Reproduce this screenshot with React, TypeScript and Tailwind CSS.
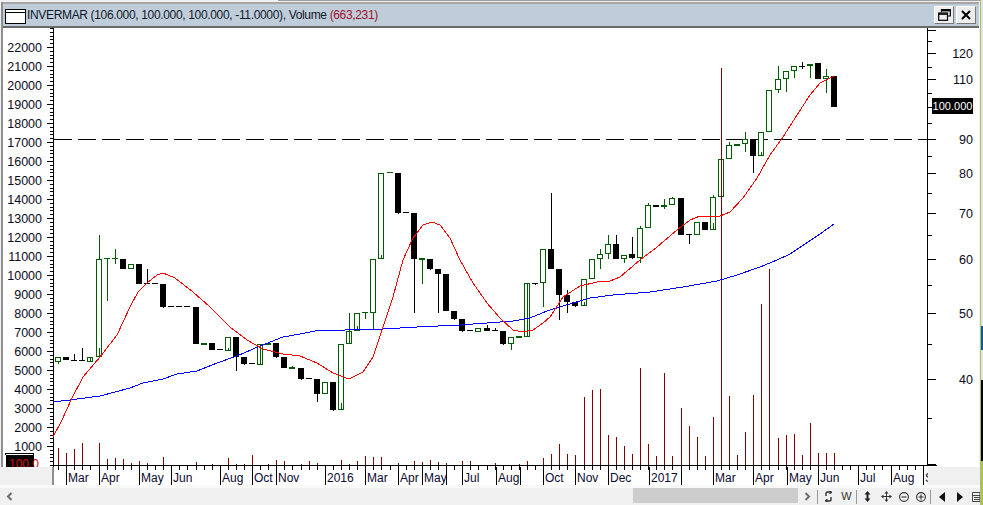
import React from "react";

type Candle = [number, "g" | "b", number, number, number?, number?, number?];

// x, kind, body top, body bottom, high, low, inner tick
const candles: Candle[] = [
  [58, "g", 357, 362, 357, 364],
  [66, "b", 357, 360],
  [74, "b", 360, 361, 354, 361],
  [82, "b", 360, 361, 348, 361],
  [90, "g", 357, 362, 357, 362, 357],
  [99, "g", 259, 357, 235, 357, 348],
  [107, "g", 258, 259, 258, 301],
  [115, "g", 258, 259, 249, 264],
  [123, "b", 259, 269],
  [131, "g", 264, 269],
  [139, "b", 264, 284],
  [147, "b", 283, 284, 269, 284],
  [155, "b", 283, 284],
  [163, "b", 284, 307, 284, 308],
  [171, "b", 306, 307],
  [179, "b", 306, 307],
  [187, "b", 306, 307],
  [196, "b", 307, 344],
  [204, "g", 343, 345],
  [212, "b", 343, 350],
  [220, "b", 349, 350],
  [228, "g", 337, 351, 337, 351, 348],
  [236, "b", 337, 357, 337, 371],
  [244, "b", 357, 364, 357, 365],
  [252, "b", 363, 364],
  [260, "g", 344, 365, 344, 365, 344],
  [268, "g", 343, 345, 342, 345],
  [276, "b", 343, 357, 343, 358],
  [284, "b", 357, 368],
  [292, "g", 367, 369, 366, 369],
  [301, "b", 368, 379, 368, 380],
  [309, "b", 378, 379],
  [317, "b", 379, 394, 379, 402],
  [325, "g", 382, 394],
  [333, "b", 382, 410, 382, 411],
  [341, "g", 344, 410, 344, 410, 403],
  [349, "g", 331, 344, 313, 344, 331],
  [357, "g", 313, 331, 313, 331, 326],
  [365, "g", 312, 313, 312, 319],
  [373, "g", 259, 313, 259, 330],
  [381, "g", 173, 259, 173, 259, 255],
  [390, "g", 172, 173],
  [398, "b", 173, 213, 173, 214],
  [406, "b", 212, 213],
  [414, "b", 213, 259, 213, 313],
  [422, "g", 258, 260, 258, 284],
  [430, "b", 259, 269, 259, 270],
  [438, "b", 269, 274, 269, 313],
  [446, "b", 274, 311],
  [454, "b", 311, 319, 311, 320],
  [462, "b", 319, 331, 319, 332],
  [470, "b", 330, 331],
  [478, "g", 328, 332],
  [487, "b", 328, 331, 325, 331],
  [495, "b", 330, 331, 328, 331],
  [503, "b", 331, 344, 331, 345],
  [511, "g", 337, 344, 337, 350],
  [519, "g", 336, 338],
  [527, "g", 283, 337, 283, 337, 283],
  [535, "b", 283, 284, 283, 285],
  [543, "g", 249, 283, 249, 307],
  [551, "b", 249, 269, 193, 269],
  [559, "b", 269, 295, 269, 320],
  [567, "b", 295, 302, 290, 313],
  [575, "b", 302, 306, 302, 307],
  [584, "g", 279, 306, 279, 306, 302],
  [592, "g", 259, 279],
  [600, "g", 254, 259, 249, 269],
  [608, "g", 244, 254, 235, 259],
  [616, "b", 244, 259, 235, 259],
  [624, "g", 255, 259, 255, 263],
  [632, "b", 254, 258, 237, 259],
  [640, "g", 228, 258, 226, 263],
  [648, "g", 205, 228, 203, 228],
  [656, "b", 205, 207],
  [664, "g", 205, 207, 199, 209],
  [672, "g", 198, 205, 197, 205],
  [681, "b", 198, 235],
  [689, "b", 234, 235, 234, 244],
  [697, "g", 222, 235],
  [705, "b", 222, 230],
  [713, "g", 197, 230, 195, 230, 223],
  [721, "g", 159, 197],
  [729, "g", 145, 159, 142, 159],
  [737, "g", 144, 146],
  [745, "g", 139, 144, 132, 152],
  [753, "b", 139, 156, 139, 173],
  [761, "g", 132, 156, 132, 156, 152],
  [769, "g", 90, 132],
  [778, "g", 79, 90, 66, 93],
  [786, "g", 71, 79, 71, 92],
  [794, "g", 66, 71, 66, 78],
  [802, "b", 66, 67, 62, 69],
  [810, "g", 64, 66, 64, 78],
  [818, "b", 63, 79],
  [826, "g", 76, 79, 69, 93],
  [834, "b", 76, 107],
];

// x, top of the volume bar (baseline is y=465)
const volumes: [number, number][] = [
  [58, 448], [66, 453], [74, 449], [82, 443], [99, 443], [107, 459], [115, 458], [123, 459], [131, 463],
  [139, 461], [147, 463], [163, 457], [196, 462], [212, 464], [228, 458], [236, 464], [244, 464], [252, 455],
  [268, 464], [276, 460], [284, 461], [301, 464], [309, 461], [317, 463], [341, 460], [349, 464], [357, 461],
  [365, 456], [373, 457], [381, 457], [398, 463], [414, 461], [422, 462], [430, 460], [438, 462], [446, 463],
  [462, 461], [470, 461], [495, 463], [519, 464], [527, 461], [543, 458], [551, 454], [559, 444], [567, 454],
  [575, 455], [584, 397], [592, 390], [600, 389], [608, 435], [616, 437], [624, 446], [632, 454], [640, 368],
  [648, 444], [656, 456], [664, 373], [672, 456], [681, 408], [689, 426], [697, 437], [705, 456], [713, 417],
  [721, 68], [729, 396], [737, 455], [745, 432], [753, 395], [761, 304], [769, 269], [778, 438], [786, 435],
  [794, 434], [802, 455], [810, 423], [818, 453], [826, 453], [834, 453],
];

const red =
  "53,437 62,420 71,400 83,377 100,357 117,335 130,307 138,292 147,283 157,275 163,273 175,278 193,292 210,307 230,327 247,340 263,349 283,354 300,356 317,363 333,373 349,379 363,372 373,357 383,327 393,297 403,260 413,238 423,225 432,222 440,225 450,238 460,260 473,283 487,303 500,318 513,330 523,332 533,330 543,323 550,317 563,297 580,286 597,282 610,281 620,277 640,260 657,247 677,230 690,220 700,216 720,216 730,212 743,198 757,178 770,155 783,137 797,115 810,95 820,83 834,76";
const blue =
  "53,402 70,400 100,396 130,388 143,383 163,379 177,374 197,371 217,363 237,356 260,346 283,337 300,334 320,330 345,330 383,329 417,327 460,325 487,323 513,321 530,318 547,311 563,306 590,298 613,295 650,292 683,287 717,281 737,275 760,267 777,260 790,254 805,244 820,234 834,224";

const tickXs = [
  58, 66, 74, 82, 90, 99, 107, 115, 123, 131, 139, 147, 155, 163, 171, 179, 187, 196, 204, 212, 220, 228, 236, 244,
  252, 260, 268, 276, 284, 292, 301, 309, 317, 325, 333, 341, 349, 357, 365, 373, 381, 390, 398, 406, 414, 422, 430,
  438, 446, 454, 462, 470, 478, 487, 495, 503, 511, 519, 527, 535, 543, 551, 559, 567, 575, 584, 592, 600, 608, 616,
  624, 632, 640, 648, 656, 664, 672, 681, 689, 697, 705, 713, 721, 729, 737, 745, 753, 761, 769, 778, 786, 794, 802,
  810, 818, 826, 834, 842, 850, 858, 866, 874, 882, 891, 899, 907, 915, 923,
];

const months: [number, string][] = [
  [66, "Mar"], [99, "Apr"], [139, "May"], [171, "Jun"], [220, "Aug"], [252, "Oct"], [276, "Nov"], [325, "2016"],
  [365, "Mar"], [398, "Apr"], [422, "May"], [446, ""], [462, "Jul"], [496, "Aug"], [520, ""], [543, "Oct"],
  [575, "Nov"], [608, "Dec"], [649, "2017"], [681, ""], [713, "Mar"], [753, "Apr"], [787, "May"], [818, "Jun"],
  [858, "Jul"], [891, "Aug"], [923, "Sep"],
];

const leftLabels = Array.from({ length: 22 }, (_, i) => (i + 1) * 1000);
const minorLeft = Array.from({ length: 116 }, (_, i) => 465 - i * 3.8);
const rightMajor: [number, string][] = [
  [30, ""], [53, "120"], [79, "110"], [139, "90"], [173, "80"], [213, "70"], [259, "60"], [313, "50"], [379, "40"], [464, ""],
];
const rightMinor = [41, 67, 93, 123, 156, 193, 235, 285, 344, 418];

const green = "#005c00";
const maroon = "#870000";

function CandleMark({ c }: { c: Candle }) {
  const [x, kind, top, bottom, high, low, inner] = c;
  const colour = kind === "g" ? green : "#000";
  const h = bottom - top;
  return (
    <g>
      {high !== undefined && low !== undefined && (
        <line x1={x + 0.5} x2={x + 0.5} y1={high} y2={low} stroke={colour} />
      )}
      {kind === "b" || h <= 2 ? (
        <rect x={x - 3} y={top} width={6} height={h} fill={colour} />
      ) : (
        <rect x={x - 2.5} y={top + 0.5} width={5} height={h - 1} fill="#fff" stroke={colour} />
      )}
      {inner !== undefined && <line x1={x + 0.5} x2={x + 0.5} y1={inner} y2={bottom} stroke={colour} />}
    </g>
  );
}

function Chart() {
  return (
    <svg width={976} height={439} viewBox="3 28 976 439" shapeRendering="crispEdges" className="block bg-white">
      {/* left price scale */}
      <line x1={53.5} x2={53.5} y1={28} y2={467} stroke="#000" />
      {minorLeft.map((y) => (
        <line key={y} x1={50} x2={53} y1={Math.round(y) + 0.5} y2={Math.round(y) + 0.5} stroke="#000" />
      ))}
      {leftLabels.map((v) => {
        const y = 465 - v * 0.019;
        return (
          <g key={v}>
            <line x1={47} x2={53} y1={Math.round(y) + 0.5} y2={Math.round(y) + 0.5} stroke="#000" />
            <text x={42} y={y + 4.5} textAnchor="end" fontSize={12.5} fill="#0a0a20" shapeRendering="auto">
              {v}
            </text>
          </g>
        );
      })}

      {/* volume box */}
      <path d="M5.5 455V453.5H33.5V455" fill="none" stroke="#000" />
      <rect x={6} y={455} width={28} height={12} fill="#000" />
      <text x={9} y={468} fontSize={12} fill="#e00000">
        100.0
      </text>

      {/* dashed level */}
      <line x1={54} x2={936} y1={139.5} y2={139.5} stroke="#000" strokeDasharray="18 6" />

      {candles.map((c) => (
        <CandleMark key={c[0]} c={c} />
      ))}
      {volumes.map(([x, top]) => (
        <line key={x} x1={x + 0.5} x2={x + 0.5} y1={top} y2={465} stroke={maroon} />
      ))}
      <polyline points={blue} fill="none" stroke="#0000ff" />
      <polyline points={red} fill="none" stroke="#ff0000" />

      {/* time axis start */}
      <line x1={53} x2={937} y1={465.5} y2={465.5} stroke="#000" />
      {tickXs.map((x) => (
        <line key={x} x1={x + 0.5} x2={x + 0.5} y1={465} y2={467} stroke="#000" />
      ))}

      {/* right price scale */}
      <line x1={927.5} x2={927.5} y1={28} y2={465} stroke="#000" />
      {rightMajor.map(([y, t]) => (
        <g key={y}>
          <line x1={928} x2={936} y1={y + 0.5} y2={y + 0.5} stroke="#000" />
          {t && (
            <text x={973} y={y + 4.5} textAnchor="end" fontSize={12.5} fill="#0a0a20" shapeRendering="auto">
              {t}
            </text>
          )}
        </g>
      ))}
      <line x1={928} x2={936} y1={107.5} y2={107.5} stroke="#000" />
      {rightMinor.map((y) => (
        <line key={y} x1={928} x2={932} y1={y + 0.5} y2={y + 0.5} stroke="#000" />
      ))}
      <rect x={932} y={98} width={41} height={16} fill="#000" />
      <text x={952.5} y={110} textAnchor="middle" fontSize={11} fill="#fff" shapeRendering="auto">
        100.000
      </text>
    </svg>
  );
}

function TimeAxis() {
  return (
    <svg width={874} height={18} viewBox="54 467 874 18" shapeRendering="crispEdges" className="block bg-white">
      {tickXs.map((x) => (
        <line key={x} x1={x + 0.5} x2={x + 0.5} y1={467} y2={470} stroke="#000" />
      ))}
      {months.map(([x, t]) => (
        <g key={x}>
          <line x1={x + 0.5} x2={x + 0.5} y1={467} y2={485} stroke="#000" />
          {t && (
            <text x={x + 2} y={482} fontSize={12} fill="#0a0a30" shapeRendering="auto">
              {t}
            </text>
          )}
        </g>
      ))}
    </svg>
  );
}

function Chevron({ left }: { left?: boolean }) {
  return (
    <svg width={7} height={9} viewBox="0 0 7 9">
      <path d={left ? "M5.5 1 2 4.5 5.5 8" : "M1.5 1 5 4.5 1.5 8"} fill="none" stroke="#6e6e6e" strokeWidth={2} />
    </svg>
  );
}

function Sep() {
  return <div className="h-[14px] w-px bg-[#9a9a9a]" />;
}

function Cell({ w, children }: { w: string; children: React.ReactNode }) {
  return <div className={`flex items-center justify-center ${w}`}>{children}</div>;
}

function BottomBar() {
  return (
    <div className="flex h-[17px] items-center">
      <div className="flex w-[633px] items-center pl-[6px]">
        <Chevron left />
      </div>
      <div className="mb-[2px] h-[15px] w-[165px] bg-[#cdcdcd]" />
      <Cell w="w-[18px]">
        <Chevron />
      </Cell>
      <div className="w-px" />
      <Sep />
      <Cell w="w-[20px]">
        <svg width={7} height={11} viewBox="0 0 7 11" fill="none" stroke="#333" strokeWidth={1.4}>
          <path d="M1 5V2.5Q1 1 3 1H5.5M4.5 0 6.5 1.3 4.5 2.8" />
          <path d="M6 6V8.5Q6 10 4 10H1.5M2.5 8.2.5 9.7 2.5 11" />
        </svg>
      </Cell>
      <Cell w="w-[17px]">
        <span className="text-[11px] leading-none text-[#333]">W</span>
      </Cell>
      <div className="w-px" />
      <Sep />
      <Cell w="w-[21px]">
        <svg width={7} height={11} viewBox="0 0 7 11" fill="#222">
          <path d="M3.5 0 6.5 3.5H4.5V7.5H6.5L3.5 11 .5 7.5H2.5V3.5H.5Z" />
        </svg>
      </Cell>
      <Cell w="w-[17px]">
        <svg width={11} height={11} viewBox="0 0 11 11" fill="#333">
          <path d="M5.5 0 7.5 2.5H6V5H8.5V3.5L11 5.5 8.5 7.5V6H6V8.5H7.5L5.5 11 3.5 8.5H5V6H2.5V7.5L0 5.5 2.5 3.5V5H5V2.5H3.5Z" />
        </svg>
      </Cell>
      <Cell w="w-[17px]">
        <svg width={10} height={10} viewBox="0 0 10 10" fill="none" stroke="#333" strokeWidth={1.1}>
          <circle cx={5} cy={5} r={4.4} />
          <path d="M2.5 5H7.5" />
        </svg>
      </Cell>
      <Cell w="w-[17px]">
        <svg width={10} height={10} viewBox="0 0 10 10" fill="none" stroke="#333" strokeWidth={1.1}>
          <circle cx={5} cy={5} r={4.4} />
          <path d="M2.5 5H7.5M5 2.5V7.5" />
        </svg>
      </Cell>
      <div className="w-[1px]" />
      <Sep />
      <Cell w="w-[22px]">
        <svg width={6} height={10} viewBox="0 0 6 10" fill="#111">
          <path d="M6 0V10L0 5Z" />
        </svg>
      </Cell>
      <Cell w="w-[14px]">
        <svg width={6} height={10} viewBox="0 0 6 10" fill="#111">
          <path d="M0 0V10L6 5Z" />
        </svg>
      </Cell>
      <Cell w="w-[13px] pl-[5px]">
        <svg width={8} height={10} viewBox="0 0 8 10" className="shrink-0" fill="none" stroke="#444">
          <path d="M.5.5H8V9.5H.5ZM.5 3.5H8M2 5.5H8M2 7.5H8" />
        </svg>
      </Cell>
    </div>
  );
}

const App: React.FC = () => {
  return (
    <div className="flex h-[505px] w-[983px] overflow-hidden bg-[#f0f0f0] font-['Liberation_Sans',Arial,sans-serif]">
      <div className="flex w-[980px] flex-col">
        <div className="flex h-[2px]">
          <div className="w-[278px]" />
          <div className="h-px flex-1 bg-[#a0a0a0]" />
        </div>
        <div className="ml-px border-l-2 border-[#8f8f8f]">
          <div className="mr-px flex h-[26px] items-center border-y-2 border-t-[#a6a6a6] border-b-[#6a6a6a] bg-[#bfcddb] pl-[2px] pr-[3px]">
            <svg width={21} height={15} viewBox="0 0 21 15" className="mt-[2px] shrink-0" fill="#fff" stroke="#000">
              <rect x={0.5} y={0.5} width={20} height={14} />
              <path d="M.5 3.5H20.5" />
            </svg>
            <span className="ml-px whitespace-nowrap text-[12px] tracking-[-0.34px] text-[#101828]">
              INVERMAR (106.000, 100.000, 100.000, -11.0000), Volume <span className="text-[#a0102c]">(663,231)</span>
            </span>
            <div className="flex-1" />
            <button className="flex h-[18px] w-[20px] items-center justify-center border border-t-white border-l-white border-r-[#777] border-b-[#777] bg-[#ededed]">
              <svg width={13} height={12} viewBox="0 0 13 12" fill="none" stroke="#000" strokeWidth={1.2}>
                <path d="M3.5 3V.7H12.3V7H9.5" />
                <path d="M3.5 1.6H12.3" strokeWidth={1.6} />
                <rect x={0.7} y={4} width={8.8} height={7.3} />
                <path d="M.7 5H9.5" strokeWidth={1.6} />
              </svg>
            </button>
            <button className="ml-[2px] flex h-[18px] w-[20px] items-center justify-center border border-t-white border-l-white border-r-[#777] border-b-[#777] bg-[#ededed]">
              <svg width={10} height={10} viewBox="0 0 10 10" fill="none" stroke="#000" strokeWidth={2}>
                <path d="M1 1 9 9M9 1 1 9" />
              </svg>
            </button>
          </div>
          <Chart />
        </div>
        <div className="flex h-[18px]">
          <div className="w-[54px] shrink-0 border-r-2 border-[#8f8f8f]" />
          <div className="w-[874px] shrink-0">
            <TimeAxis />
          </div>
        </div>
        <div className="h-[3px] bg-[#fafafa]" />
        <BottomBar />
      </div>
      <div className="flex w-[3px] flex-col border-l border-[#a9c25d]">
        <div className="h-[326px] bg-[#e4e4e4]" />
        <div className="h-[24px] bg-[#0b5c9e]" />
        <div className="h-[30px] bg-[#e4e4e4]" />
        <div className="h-[81px] bg-black" />
        <div className="flex-1 bg-[#a9c25d]" />
      </div>
    </div>
  );
};

export default App;
